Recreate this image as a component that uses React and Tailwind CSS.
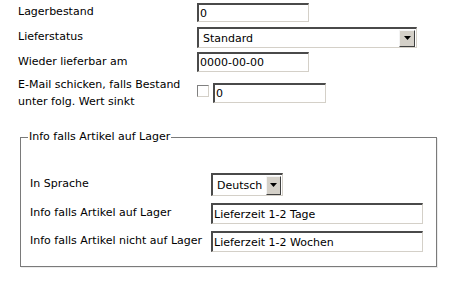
import React from "react";

const inputCls =
  "box-border bg-white border-t-2 border-l-2 border-r border-b border-t-[#4a4a4a] border-l-[#4a4a4a] border-r-[#d4d0c8] border-b-[#d4d0c8] px-[1px] text-[11px] text-black outline-none font-['DejaVu_Sans',sans-serif]";

function Arrow() {
  return (
    <svg width="7" height="4" viewBox="0 0 7 4" className="block">
      <path d="M0 0H7L3.5 4Z" fill="#000" />
    </svg>
  );
}

function FakeSelect({ wCls, hCls, btnCls, text, padCls }) {
  return (
    <div className={`${inputCls} ${wCls} ${hCls} flex items-center justify-between !px-0`}>
      <span className={`${padCls} leading-none`}>{text}</span>
      <span
        className={`${btnCls} mr-[1px] flex items-center justify-center bg-[#d4d0c8] border border-t-[#f4f4f4] border-l-[#f4f4f4] border-r-[#404040] border-b-[#404040]`}
      >
        <Arrow />
      </span>
    </div>
  );
}

export default function App() {
  return (
    <div className="w-[469px] h-[285px] bg-white text-black text-[11px] font-['DejaVu_Sans',sans-serif] overflow-hidden">
      <div className="pl-[18px] pt-[3px]">
        <div className="flex items-center h-[19px]">
          <div className="w-[179px]">Lagerbestand</div>
          <input className={`${inputCls} w-[112px] h-[19px]`} defaultValue="0" />
        </div>
        <div className="flex items-center h-[21px] mt-[5px]">
          <div className="w-[179px]">Lieferstatus</div>
          <FakeSelect wCls="w-[220px]" hCls="h-[21px]" btnCls="w-[16px] h-[17px]" text="Standard" padCls="pl-[4px]" />
        </div>
        <div className="flex items-center h-[20px] mt-[4px]">
          <div className="w-[179px]">Wieder lieferbar am</div>
          <input className={`${inputCls} w-[112px] h-[20px]`} defaultValue="0000-00-00" />
        </div>
        <div className="flex items-center mt-[4px]">
          <div className="w-[179px] leading-[17px]">
            E-Mail schicken, falls Bestand
            <br />
            unter folg. Wert sinkt
          </div>
          <div className="flex items-center gap-[4px]">
            <span className="box-border w-[12px] h-[12px] mb-[4px] bg-white border border-t-[#808080] border-l-[#808080] border-r-[#d4d0c8] border-b-[#d4d0c8]" />
            <input className={`${inputCls} w-[113px] h-[20px]`} defaultValue="0" />
          </div>
        </div>
      </div>

      <fieldset className="ml-[20px] mt-[20px] w-[417px] border border-[#7a7a7a] shadow-[1px_1px_0_#ececec] px-[7px] pt-[29px] pb-[14px]">
        <legend className="px-[1px] leading-[14px]">Info falls Artikel auf Lager</legend>
        <div className="pl-[2px]">
          <div className="flex items-center h-[23px]">
            <div className="w-[181px]">In Sprache</div>
            <FakeSelect wCls="w-[72px]" hCls="h-[23px]" btnCls="w-[15px] h-[19px]" text="Deutsch" padCls="pl-[4px]" />
          </div>
          <div className="flex items-center h-[21px] mt-[7px]">
            <div className="w-[181px]">Info falls Artikel auf Lager</div>
            <input className={`${inputCls} w-[212px] h-[21px]`} defaultValue="Lieferzeit 1-2 Tage" />
          </div>
          <div className="flex items-center h-[21px] mt-[7px]">
            <div className="w-[181px] whitespace-nowrap">Info falls Artikel nicht auf Lager</div>
            <input className={`${inputCls} w-[212px] h-[21px]`} defaultValue="Lieferzeit 1-2 Wochen" />
          </div>
        </div>
      </fieldset>
    </div>
  );
}
